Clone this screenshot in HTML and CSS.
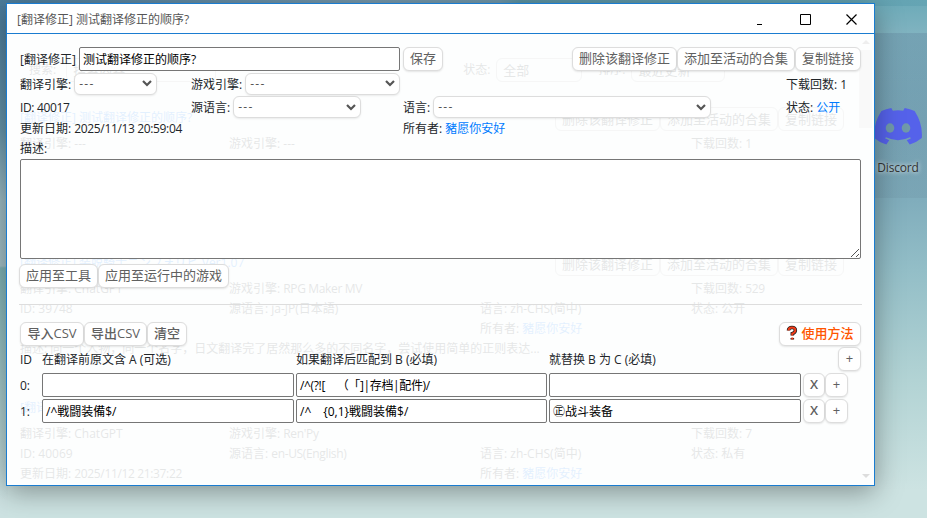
FILE: index.html
```
<!DOCTYPE html>
<html lang="zh-CN">
<head>
  <meta charset="UTF-8">
  <title>[翻译修正] 测试翻译修正的顺序?</title>
  <link rel="stylesheet" href="styles.css">
</head>
<body>
  <div class="shortcut">
    <svg width="48" height="37" viewBox="0 0 48 37">
      <path fill="#5562ea" d="M40.600 3.100A39 39 0 0 0 30.700 0L29.200 2.700Q24 2 18.800 2.700L17.300 0A39 39 0 0 0 7.400 3.100Q-1 16 .2 30Q5.600 34.600 12.300 36.500L15.200 32.200L11 30.200L12 29.300Q24 35 36 29.300L37 30.200L32.800 32.200L35.700 36.500Q42.400 34.600 47.800 30Q49 16 40.600 3.100Z"/>
      <ellipse cx="16" cy="20" rx="4.300" ry="4.700" fill="#7099a9"/>
      <ellipse cx="32" cy="20" rx="4.300" ry="4.700" fill="#7099a9"/>
    </svg>
    <span>Discord</span>
  </div>

  <div class="window">
    <div class="titlebar">
      <span class="title">[翻译修正] 测试翻译修正的顺序?</span>
      <svg class="ctl" width="46" height="29" viewBox="0 0 46 29"><path d="M21 20.500h5" stroke="#000"/></svg>
      <svg class="ctl" width="46" height="29" viewBox="0 0 46 29"><path d="M18.500 10.500h10v10h-10z" fill="none" stroke="#000"/></svg>
      <svg class="ctl" width="46" height="29" viewBox="0 0 46 29"><path d="M18.500 10.500l10 10M28.500 10.500l-10 10" stroke="#000" stroke-width="1.200"/></svg>
    </div>

    <div class="client">
      <!-- list page showing through the dialog -->
      <div class="under">
        <div class="search">
          <span>搜索:</span><i class="box keyword">搜索内容...</i>
          <span class="state">状态:</span><i class="box all">全部</i>
          <span>排序:</span><i class="box recent">最近更新</i>
        </div>
        <div class="entry">
          <div class="head"><b>[翻译修正] 测试翻译修正的顺序?</b><i class="box">删除该翻译修正</i><i class="box">添加至活动的合集</i><i class="box">复制链接</i></div>
          <div class="cells">
            <span>翻译引擎: ---</span><span>游戏引擎: ---</span><span></span><span>下载回数: 1</span>
          </div>
        </div>
        <div class="entry">
          <div class="head"><b>[翻译修正] 装脱騎士ニンフォリビ Ver1.07</b><i class="box">删除该翻译修正</i><i class="box">添加至活动的合集</i><i class="box">复制链接</i></div>
          <div class="cells">
            <span>翻译引擎: ChatGPT</span><span>游戏引擎: <em>RPG Maker MV</em></span><span></span><span>下载回数: <em>529</em></span>
            <span>ID: 39748</span><span>源语言: ja-JP(日本語)</span><span>语言: zh-CHS(简中)</span><span>状态: 公开</span>
            <span></span><span></span><span>所有者: <a>豬愿你安好</a></span><span></span>
          </div>
          <p>描述: 同一个人物，同一个名字，日文翻译完了居然那么多的不同名字，尝试使用简单的正则表达...</p>
        </div>
        <div class="entry">
          <div class="head"><b>[翻译</b></div>
          <div class="cells">
            <span>翻译引擎: ChatGPT</span><span>游戏引擎: <em>Ren'Py</em></span><span></span><span>下载回数: 7</span>
            <span>ID: 40069</span><span>源语言: <em>en-US(English)</em></span><span>语言: zh-CHS(简中)</span><span>状态: 私有</span>
            <span>更新日期: <em>2025/11/12 21:37:22</em></span><span></span><span>所有者: <a>豬愿你安好</a></span><span></span>
          </div>
        </div>
      </div>
      <div class="scrollbar"><i class="up"></i><i class="thumb"></i><i class="down"></i></div>

      <div class="form">
        <div class="row name-row">
          <label>[翻译修正]</label>
          <div class="input name">测试翻译修正的顺序?</div>
          <button class="btn">保存</button>
          <div class="right"><button class="btn w105">删除该翻译修正</button><button class="btn w118">添加至活动的合集</button><button class="btn w66">复制链接</button></div>
        </div>

        <div class="info">
          <div>翻译引擎:<span class="select engine">---<svg width="10" height="7" viewBox="0 0 10 7"><path d="M1 1l4 4 4-4"/></svg></span></div>
          <div>游戏引擎:<span class="select game">---<svg width="10" height="7" viewBox="0 0 10 7"><path d="M1 1l4 4 4-4"/></svg></span></div>
          <div></div>
          <div>下载回数: 1</div>
          <div><em>ID: 40017</em></div>
          <div>源语言:<span class="select source">---<svg width="10" height="7" viewBox="0 0 10 7"><path d="M1 1l4 4 4-4"/></svg></span></div>
          <div>语言:<span class="select target">---<svg width="10" height="7" viewBox="0 0 10 7"><path d="M1 1l4 4 4-4"/></svg></span></div>
          <div>状态:&nbsp;<a>公开</a></div>
          <div>更新日期:&nbsp;<em>2025/11/13 20:59:04</em></div>
          <div></div>
          <div>所有者:&nbsp;<a>豬愿你安好</a></div>
          <div></div>
        </div>

        <div class="desc-label">描述:</div>
        <div class="textarea"><svg width="10" height="10" viewBox="0 0 10 10"><path d="M1 9l8-8M6 9l3-3" stroke="#555" fill="none"/></svg></div>
        <div class="row apply-row"><button class="btn w79">应用至工具</button><button class="btn w131">应用至运行中的游戏</button></div>
        <div class="line"></div>

        <div class="row csv-row">
          <button class="btn w64">导入CSV</button><button class="btn w63">导出CSV</button><button class="btn w40">清空</button>
          <button class="btn help"><svg width="12" height="16" viewBox="0 0 12 16"><path d="M2.500 5.500Q2.500 2.500 6 2.500T9.300 5.500Q9.300 7.500 6.300 8.600V10.500M6.300 13v1.500" fill="none" stroke="#222" stroke-width="3.600"/><path d="M2.500 5.500Q2.500 2.500 6 2.500T9.300 5.500Q9.300 7.500 6.300 8.600V10.500M6.300 12.500v2" fill="none" stroke="#f03a17" stroke-width="2"/></svg>使用方法</button>
        </div>

        <div class="rules rules-head">
          <span>ID</span><span>在翻译前原文含 A (可选)</span><span>如果翻译后匹配到 B (必填)</span><span>就替换 B 为 C (必填)</span>
          <button class="btn add">+</button>
        </div>
        <div class="rules">
          <span>0:</span><div class="input"></div><div class="input regex">/^(?![　（「]|存档|配件)/</div><div class="input"></div>
          <div class="ops"><button class="btn x">X</button><button class="btn">+</button></div>
        </div>
        <div class="rules">
          <span>1:</span><div class="input">/^戦闘装備$/</div><div class="input">/^　{0,1}戦闘装備$/</div><div class="input">㊣战斗装备</div>
          <div class="ops"><button class="btn x">X</button><button class="btn">+</button></div>
        </div>
      </div>
    </div>
  </div>
</body>
</html>
```
FILE: styles.css
```
* {
  box-sizing: border-box;
}

body {
  margin: 0;
  height: 518px;
  padding: 3px 0 0 6px;
  overflow: hidden;
  position: relative;
  background:
    linear-gradient(rgba(80, 110, 140, 0.24), rgba(90, 120, 140, 0.14)) 870px 33px / 57px 165px no-repeat,
    linear-gradient(90deg, #4d7d9c, #7799ac 40%, #7097a9 54%, #5c93a3 56%, #65a5b4) 0 0 / 100% 6px no-repeat,
    linear-gradient(#4a7a9b, #6796ab 130px, #9dbcc4 200px, #a3c0c6 266px, #7fb3b6 268px, #b5d3d3 440px, #cde2e2 500px) 0 0 / 8px 100% no-repeat,
    linear-gradient(#6baab8 0, #80b3c0 33px, #7cabbb 120px, #80adbc 200px, #93bec7 270px, #b2d3d4 380px, #cde3e2 490px);
  font: 12px/16px "Open Sans", "Noto Sans CJK SC", sans-serif;
  color: #212529;
}

em, i {
  font-style: normal;
}

em {
  letter-spacing: -0.35px;
}

a {
  color: #007bff;
}

/* desktop icon */
.shortcut {
  position: absolute;
  left: 874px;
  top: 108px;
  width: 48px;
  color: #333;
  text-align: center;
  text-shadow: 0 0 4px #d8e4e8, 0 0 5px #b8ccd4;
}

.shortcut svg {
  display: block;
}

.shortcut span {
  display: block;
  margin-top: 15px;
  letter-spacing: -0.2px;
}

.window {
  position: relative;
  width: 869px;
  height: 483px;
  border: 1px solid #1a7cd0;
  background: #fff;
  box-shadow: 0 6px 26px rgba(0, 0, 0, 0.36);
}

.titlebar {
  display: flex;
  height: 30px;
  padding-left: 10px;
  border-bottom: 1px solid #1a7cd0;
  color: #555;
}

.title {
  flex: 1;
  line-height: 31px;
}

.client {
  position: relative;
  height: 451px;
  overflow: hidden;
  background: #fdfefe;
}

/* faded list below the dialog */
.under {
  position: absolute;
  left: 13px;
  top: 23px;
  width: 842px;
  opacity: 0.1;
  white-space: nowrap;
}

.search {
  display: flex;
  align-items: center;
  height: 26px;
  margin-left: 9px;
}

.box {
  border: 1px solid #bbb;
  border-radius: 6px;
  height: 24px;
  padding: 0 6px;
  font-size: 13px;
  line-height: 22px;
}

.keyword {
  width: 150px;
  margin-left: 10px;
}

.state {
  margin-left: 247px;
}

.all {
  width: 86px;
  margin: 0 16px 0 6px;
}

.recent {
  width: 94px;
  margin-left: 6px;
}

.entry {
  height: 145px;
}

.search + .entry {
  margin-top: 27px;
}

.head {
  display: flex;
  height: 26px;
  margin-right: 18px;
}

.head .box {
  margin-top: -3px;
}

.head b {
  flex: 1;
  font-weight: 400;
  color: #007bff;
}

.cells {
  display: grid;
  grid-template-columns: 209px 251px 211px 1fr;
  grid-auto-rows: 20px;
}

.entry p {
  margin: 0;
}

.scrollbar {
  position: absolute;
  right: 2px;
  top: 6px;
  width: 13px;
  height: 438px;
  display: flex;
  flex-direction: column;
  align-items: center;
}

.up, .down {
  border: 4px solid transparent;
}

.up {
  border-top: 0;
  border-bottom-color: #eee;
}

.down {
  margin-top: auto;
  border-bottom: 0;
  border-top-color: #ddd;
}

.thumb {
  width: 13px;
  height: 78px;
  margin-top: 6px;
  background: #f9f9f9;
}

/* dialog */
.form {
  position: relative;
  width: 855px;
  padding: 13px 0 0 13px;
}

.row {
  display: flex;
  align-items: center;
  height: 24px;
}

.name-row {
  padding-right: 1px;
}

.right {
  display: flex;
  margin-left: auto;
}

.input {
  height: 24px;
  border: 1px solid #767676;
  border-radius: 2px;
  background: #fff;
  color: #000;
  padding: 0 3px;
  line-height: 23px;
  white-space: pre;
}

.name-row label {
  width: 59px;
  padding-top: 1px;
}

.name {
  width: 321px;
  margin-right: 3px;
}

.regex {
  letter-spacing: -0.350px;
  text-spacing-trim: space-all;
}

.btn {
  height: 24px;
  padding: 0 0 2px;
  border: 1px solid #ddd;
  border-radius: 6px;
  background: #fff;
  box-shadow: 0 1px 2px rgba(0, 0, 0, 0.1);
  color: #606060;
  font: 13px/20px "Open Sans", "Noto Sans CJK SC", sans-serif;
  white-space: nowrap;
}

.name-row > .btn {
  width: 40px;
}

.w105 { width: 105px; }
.w118 { width: 118px; }
.w66 { width: 66px; }
.w79 { width: 79px; }
.w131 { width: 131px; }
.w64 { width: 64px; }
.w63 { width: 63px; }
.w40 { width: 40px; }

.info {
  display: grid;
  grid-template-columns: 171px 212px 383px 1fr;
  grid-template-rows: 25px 22px 20px;
  padding-top: 1px;
}

.info > div {
  display: flex;
  align-items: center;
  white-space: nowrap;
}

.select {
  display: flex;
  align-items: center;
  justify-content: space-between;
  height: 22px;
  margin: 0 0 2px 3px;
  padding: 0 4px;
  border: 1px solid #ddd;
  border-radius: 6px;
  background: #fff;
  box-shadow: 0 1px 2px rgba(0, 0, 0, 0.08);
  color: #555;
  letter-spacing: 1.300px;
}

.select path {
  fill: none;
  stroke: #555;
  stroke-width: 2.200;
}

.engine { width: 83px; }
.game { width: 155px; }
.source { width: 128px; }
.target { width: 278px; }

.desc-label {
  height: 20px;
  line-height: 20px;
}

.textarea {
  display: flex;
  align-items: flex-end;
  justify-content: flex-end;
  width: 841px;
  height: 100px;
  border: 1px solid #767676;
  border-radius: 2px;
  background: #fff;
}

.apply-row {
  margin: 5px 0 0 -1px;
}

.line {
  height: 1px;
  margin: 16px 0 17px -1px;
  background: #ddd;
}

.csv-row .btn {
  font-weight: 500;
}

.csv-row .help {
  display: flex;
  align-items: center;
  justify-content: center;
  gap: 3px;
  width: 82px;
  margin: 0 1px 0 auto;
  color: #ff5500;
}

.rules {
  display: grid;
  grid-template-columns: 20px 252px 251px 252px 1fr;
  column-gap: 2px;
  align-items: center;
  height: 24px;
  margin-bottom: 2px;
}

.rules > span {
  padding-top: 2px;
}

.rules-head {
  margin-top: 1px;
}

.rules .add {
  width: 23px;
  margin-left: 35px;
}

.ops {
  display: flex;
}

.ops .btn {
  width: 23px;
}

.ops .x {
  width: 22px;
  font-weight: 600;
}
```
